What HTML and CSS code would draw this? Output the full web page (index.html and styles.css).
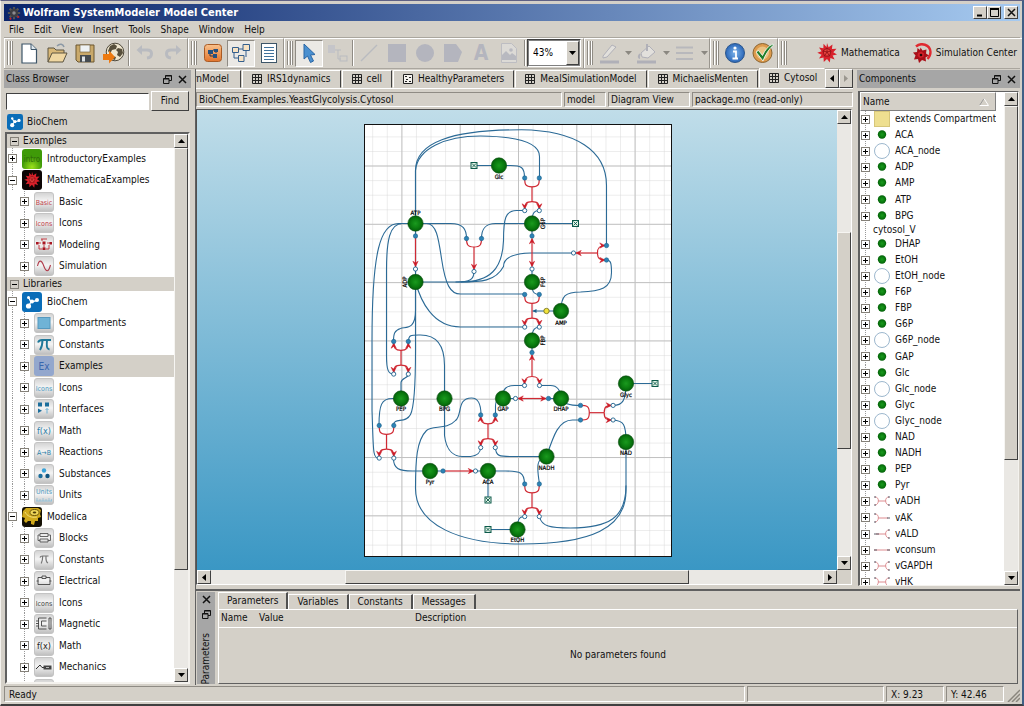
FILE: index.html
```html
<!DOCTYPE html>
<html lang="en">
<head>
<meta charset="utf-8">
<title>Wolfram SystemModeler Model Center</title>
<link rel="stylesheet" href="styles.css">
</head>
<body>
<svg class="defs" aria-hidden="true">
  <defs>
    <linearGradient id="tile" x1="0" y1="0" x2="0" y2="1"><stop offset="0" stop-color="#d2d2d2"/><stop offset=".45" stop-color="#f4f4f4"/><stop offset="1" stop-color="#bdbdbd"/></linearGradient>
    <radialGradient id="ball"><stop offset="0" stop-color="#1a9a1e"/><stop offset=".6" stop-color="#0b7d10"/><stop offset="1" stop-color="#04600a"/></radialGradient>
    <radialGradient id="lime" cy="0.9"><stop offset="0" stop-color="#9be01c"/><stop offset="1" stop-color="#3f9a08"/></radialGradient>
    <radialGradient id="infoG"><stop offset="0" stop-color="#7db4ea"/><stop offset="1" stop-color="#2a66b8"/></radialGradient>
    <linearGradient id="orangeG" x1="0" y1="0" x2="0" y2="1"><stop offset="0" stop-color="#f9c28c"/><stop offset="1" stop-color="#e2742c"/></linearGradient>
  </defs>
  <symbol id="i-tile" viewBox="0 0 20 20"><rect x=".5" y=".5" width="19" height="19" rx="2.5" fill="url(#tile)" stroke="#c4c4c4"/></symbol>
  <symbol id="i-spikey" viewBox="0 0 20 20"><path d="M10 0l1.600 4.200L15.500 1.500l-.6 4.500 4.600-.3-3.200 3.500 3.700 2.300-4.400 1 2 4-4.200-1.500-.6 4.600-2.800-3.700-3.200 3.200-.3-4.500-4.500.8 2.600-3.700L.3 9.800l4.300-1.500L2 4.600l4.400.7L6.500.8l3 3.200z" fill="#d8202a"/><path d="M10 5l4 3-1.500 5h-5L6 8zM10 5v4M14 8l-4 1M12.500 13L10 9M7.500 13L10 9M6 8l4 1" fill="#e8453f" stroke="#8c0d14" stroke-width=".8"/></symbol>
  <symbol id="i-mma" viewBox="0 0 20 20"><rect width="20" height="20" rx="3" fill="#0c0505"/><use href="#i-spikey" x="2" y="2" width="16" height="16"/></symbol>
  <symbol id="i-modeling" viewBox="0 0 20 20"><use href="#i-tile"/><path d="M3 8h4M13 8h4M8 6V4M7 4h6M10 10v4M5 10v4h3M15 10v4h-3" fill="none" stroke="#c22a34" stroke-width=".9"/><path d="M2 7h2.500v2.500H2zM8.500 6.500h3V9.500h-3zM15.500 7h2.500v2.500h-2.500zM8.500 12.500h3V15h-3z" fill="#a81622"/></symbol>
  <symbol id="i-sim" viewBox="0 0 20 20"><use href="#i-tile"/><path d="M3.500 10C5 3.500 7.500 3.500 9.800 10S14.500 16.500 16.500 9" fill="none" stroke="#b03848" stroke-width="1.100"/></symbol>
  <symbol id="i-bio" viewBox="0 0 20 20"><rect width="20" height="20" rx="3" fill="#0a6db8"/><path d="M6.500 5.500L9 10l6-1.500M9 10l-2.500 4" stroke="#fff" stroke-width="1.300" fill="none"/><circle cx="6.500" cy="5.500" r="1.500" fill="#fff"/><circle cx="10" cy="9.500" r="2" fill="#fff"/><circle cx="15" cy="8" r="2" fill="#fff"/><circle cx="6.500" cy="14" r="2.600" fill="#fff"/></symbol>
  <symbol id="i-comp" viewBox="0 0 20 20"><use href="#i-tile"/><rect x="4" y="4.500" width="12" height="11" fill="#6fb3d6" stroke="#5598be"/></symbol>
  <symbol id="i-pi-b" viewBox="0 0 20 20"><use href="#i-tile"/><path d="M4 7.500C5 5 6 5 8 5h9M8.500 5c0 4-.5 7-2.500 10M13 5c-.5 6-.5 9 2.500 9.500" fill="none" stroke="#1e7899" stroke-width="1.900"/></symbol>
  <symbol id="i-pi-k" viewBox="0 0 20 20"><use href="#i-tile"/><path d="M6 7.500C6.500 6 7 6 8.500 6H14.500M8.700 6c0 3-.2 5-1.500 7.500M12 6c-.3 4-.3 6 2 7" fill="none" stroke="#777" stroke-width="1.200"/></symbol>
  <symbol id="i-iface" viewBox="0 0 20 20"><use href="#i-tile"/><rect x="4" y="3.500" width="4" height="4" fill="#1c6e9c"/><rect x="11" y="3.500" width="4" height="4" fill="#1c6e9c"/><path d="M4 9.500l4 2.300-4 2.200z" fill="#1c6e9c"/><path d="M13 9.500v5M11.500 11l1.500-1.500 1.500 1.500" stroke="#6db1d5" fill="none"/></symbol>
  <symbol id="i-subst" viewBox="0 0 20 20"><use href="#i-tile"/><circle cx="10" cy="6.500" r="2.200" fill="#39a2d8"/><circle cx="6.500" cy="12" r="2.200" fill="#1c6e9c"/><circle cx="13.500" cy="12" r="2.200" fill="#0f5580"/></symbol>
  <symbol id="i-gear" viewBox="0 0 20 20"><rect width="20" height="20" rx="3" fill="#141004"/><path d="M1 4l3-3h12l3 2-1 4 1 3-3 1 0 3-3 0-1 4-3-1 0-3-3 0-2 2-2-2 1-3-3-1z" fill="#d0a91c"/><ellipse cx="12.500" cy="5.500" rx="4.500" ry="3" fill="#f0d75a" stroke="#6b540a"/><ellipse cx="12.500" cy="5.500" rx="1.800" ry="1.100" fill="#4c3c08"/><path d="M3 5c2 4 6 6 12 5" fill="none" stroke="#f3e07a"/></symbol>
  <symbol id="i-blocks" viewBox="0 0 20 20"><use href="#i-tile"/><path d="M6 5.500h8v3H6zM6 11h8v3H6zM6 7H4v5.500h2M14 7h2.500v5.500H14" fill="none" stroke="#555" stroke-width=".9"/></symbol>
  <symbol id="i-elec" viewBox="0 0 20 20"><use href="#i-tile"/><path d="M4 6.500h4M12 6.500h4v7H4v-7M8 5h4v2.500H8zM2.500 10h2M15.500 10h2" fill="none" stroke="#444" stroke-width=".9"/></symbol>
  <symbol id="i-mag" viewBox="0 0 20 20"><use href="#i-tile"/><path d="M12.500 4h-8v11h8M12.500 7H7.500v5h5M15 4h2v11h-2zM2 7h3M2 9.500h3M2 12h3" fill="none" stroke="#444" stroke-width=".9"/></symbol>
  <symbol id="i-mech" viewBox="0 0 20 20"><use href="#i-tile"/><path d="M2 12l4-4 2 2.500h3" fill="none" stroke="#333"/><rect x="9.500" y="8.500" width="8" height="4" fill="#444"/><path d="M12 10.500h3" stroke="#bbb"/></symbol>
  <symbol id="c-dot" viewBox="0 0 16 16"><circle cx="8" cy="7.500" r="4.200" fill="url(#ball)"/></symbol>
  <symbol id="c-ring" viewBox="0 0 16 16"><circle cx="8" cy="8" r="7.500" fill="#fff" stroke="#83a5c0" stroke-width=".8"/></symbol>
  <symbol id="c-sq" viewBox="0 0 16 16"><rect x=".5" y="0.500" width="15" height="15" fill="#eedf90" stroke="#d6c67a"/></symbol>
  <symbol id="c-yy" viewBox="0 0 16 16"><path d="M1 4c5 0 4 8 0 8M4.500 8h7M15 4c-5 0-4 8 0 8" fill="none" stroke="#d98085" stroke-width=".9"/><path d="M0 4h2M0 12h2M14 4h2M14 12h2" stroke="#5b5b66"/></symbol>
  <symbol id="c-yl" viewBox="0 0 16 16"><path d="M1 4c5 0 4 8 0 8M4.500 8H14" fill="none" stroke="#d98085" stroke-width=".9"/><path d="M0 4h2M0 12h2M13 8h3" stroke="#5b5b66"/></symbol>
  <symbol id="c-ly" viewBox="0 0 16 16"><path d="M2 8h9.500M15 4c-5 0-4 8 0 8" fill="none" stroke="#d98085" stroke-width=".9"/><path d="M0 8h5M14 4h2M14 12h2" stroke="#5b5b66"/></symbol>
  <symbol id="c-l" viewBox="0 0 16 16"><path d="M0 8h16" stroke="#d98085" stroke-width=".9"/><path d="M0 8h3M13 8h3" stroke="#5b5b66"/></symbol>
  <symbol id="i-grid" viewBox="0 0 10 10"><path d="M.5.500h9v9h-9zM.5 3.500h9M.5 6.500h9M3.500.500v9M6.500.500v9" fill="none" stroke="#222"/></symbol>
  <symbol id="i-rec" viewBox="0 0 10 10"><path d="M.5.500h9v9h-9z" fill="#f4f2ee" stroke="#222"/><path d="M2 2.500h2M6 3.500h2M3 5.500h2M2 7.500h2M6 7.500h2" stroke="#222"/></symbol>
  <symbol id="i-float" viewBox="0 0 9 9"><path d="M2.500 3V.500h6v5H6M2.500 1h6M.5 3.500h5.500v5H.5zM.5 4h5.500" fill="none" stroke="#111"/></symbol>
  <symbol id="i-x" viewBox="0 0 9 9"><path d="M1 1l7 7M8 1L1 8" stroke="#111" stroke-width="1.500"/></symbol>
  <symbol id="a-up" viewBox="0 0 7 4"><path d="M3.500 0L7 4H0z"/></symbol>
  <symbol id="a-down" viewBox="0 0 7 4"><path d="M0 0h7L3.500 4z"/></symbol>
  <symbol id="a-left" viewBox="0 0 4 7"><path d="M4 0v7L0 3.500z"/></symbol>
  <symbol id="a-right" viewBox="0 0 4 7"><path d="M0 0v7l4-3.500z"/></symbol>
</svg>

<header class="titlebar">
  <svg class="appicon" viewBox="0 0 16 16"><path d="M8 1v14M1 8h14M3 3l10 10M13 3L3 13" stroke="#555" stroke-width="2.500"/><circle cx="8" cy="8" r="4.800" fill="#3d3d42"/><circle cx="8" cy="8" r="2" fill="#8b8b90"/><path d="M5 14l-2 1M12 13l2-1" stroke="#c0202a" stroke-width="2"/></svg>
  <h1>Wolfram SystemModeler Model Center</h1>
  <button class="cap" aria-label="Minimize"><svg viewBox="0 0 9 9"><path d="M1 7.500h5" stroke="#000" stroke-width="2"/></svg></button><button class="cap" aria-label="Maximize"><svg viewBox="0 0 9 9"><path d="M.5 1h8v7.500h-8z" fill="none" stroke="#000"/><path d="M0 1h9" stroke="#000" stroke-width="2"/></svg></button><button class="cap last" aria-label="Close"><svg><use href="#i-x"/></svg></button>
</header>

<nav class="menu"><button>File</button><button>Edit</button><button>View</button><button>Insert</button><button>Tools</button><button>Shape</button><button>Window</button><button>Help</button></nav>

<div class="toolbar">
  <div class="group">
    <i class="handle"></i>
    <button class="tb" aria-label="New"><svg viewBox="0 0 24 24"><path d="M5 3h9l5.500 5.500V22H5z" fill="#fff" stroke="#3d5568" stroke-width="1.200"/><path d="M14 3v5.500h5.500" fill="#dfe8ee" stroke="#3d5568"/></svg></button>
    <button class="tb" aria-label="Open"><svg viewBox="0 0 24 24"><path d="M3 21V7h6l2 2h8v4" fill="#d9b878" stroke="#5c5440"/><path d="M3 21l4-9h15l-4 9z" fill="#f0d7a2" stroke="#5c5440"/><path d="M12 5c3-3 6-2 7 1" fill="none" stroke="#8b98a5" stroke-width="1.500"/></svg></button>
    <button class="tb" aria-label="Save"><svg viewBox="0 0 24 24"><path d="M3 4h18v17H5l-2-2z" fill="#c9a96b" stroke="#6a5630"/><rect x="7" y="4" width="10" height="7" fill="#eef2f4" stroke="#6a5630" stroke-width=".6"/><rect x="7" y="14" width="11" height="7" fill="#454b50"/><rect x="9" y="15.500" width="3" height="5" fill="#dfe3e6"/></svg></button>
    <button class="tb" aria-label="Publish"><svg viewBox="0 0 24 24"><circle cx="14" cy="11" r="8.800" fill="#efe6cf" stroke="#4f4a3d"/><path d="M9 5l4-2 3 2-1 3-4 1-2 4-2-3zM17 7l4 1 1 4-3 4-3-2 1-3-2-2zM11 15l4 1-1 3-3-1z" fill="#574f3c"/><path d="M2 13h6V9.500l6 6.500-6 6.500V19H2z" fill="#ee7a10"/></svg></button>
    <i class="sep"></i>
    <button class="tb" aria-label="Undo"><svg viewBox="0 0 24 24"><path d="M7 9h7c6 0 6 7 0 8" fill="none" stroke="#b9bbc0" stroke-width="3"/><path d="M9 4v10L3.500 9z" fill="#b9bbc0"/></svg></button>
    <button class="tb" aria-label="Redo"><svg viewBox="0 0 24 24"><path d="M17 9h-7c-6 0-6 7 0 8" fill="none" stroke="#b9bbc0" stroke-width="3"/><path d="M15 4v10l5.500-5z" fill="#b9bbc0"/></svg></button>
  </div>
  <div class="group">
    <i class="handle"></i>
    <button class="tb" aria-label="Icon view"><svg viewBox="0 0 24 24"><rect x="3.500" y="3.500" width="17" height="17" rx="3" fill="url(#orangeG)" stroke="#a85a24"/><path d="M12 9h3v3M9 13v2h4" fill="none" stroke="#334"/><path d="M7 9h5v4H7zM13 8h4v3h-4zM12 13h4v4h-4z" fill="#25517f"/></svg></button>
    <button class="tb on" aria-label="Diagram view"><svg viewBox="0 0 24 24"><path d="M8 8h9M5 10v7h5M17 8v8" fill="none" stroke="#345f8d"/><path d="M3.500 6.500h6v5h-6zM14 3.500h6.500v6H14zM9.500 14.500H15v6H9.500z" fill="#f8e3c4" stroke="#345f8d"/></svg></button>
    <button class="tb" aria-label="Text view"><svg viewBox="0 0 24 24"><rect x="4.500" y="2.500" width="15" height="19" fill="#fff" stroke="#3d5568"/><path d="M7 6.500h10M7 9.500h10M7 12.500h10M7 15.500h10M7 18.500h10" stroke="#40729c" stroke-width="1.200"/></svg></button>
  </div>
  <div class="group">
    <i class="handle"></i>
    <button class="tb on" aria-label="Select"><svg viewBox="0 0 24 24"><path d="M7 3v15l3.500-3 3 6.500 3-1.500-3-6 4.500-.5z" fill="#4a90d0" stroke="#2b66a4"/></svg></button>
    <button class="tb" aria-label="Connect"><svg viewBox="0 0 24 24"><path d="M8 9h8M13 9v9h3" fill="none" stroke="#b9bbc0"/><rect x="3" y="4" width="7" height="8" fill="#c5c5c9"/><rect x="15" y="15" width="7" height="5" fill="none" stroke="#b9bbc0"/></svg></button>
    <i class="sep"></i>
    <button class="tb" aria-label="Line"><svg viewBox="0 0 24 24"><path d="M4 20L20 4" stroke="#b9bbc0" stroke-width="1.500"/></svg></button>
    <button class="tb" aria-label="Rectangle"><svg viewBox="0 0 24 24"><rect x="3" y="3" width="18" height="18" fill="#b4b5be"/></svg></button>
    <button class="tb" aria-label="Ellipse"><svg viewBox="0 0 24 24"><circle cx="12" cy="12" r="9" fill="#b4b5be"/></svg></button>
    <button class="tb" aria-label="Polygon"><svg viewBox="0 0 24 24"><path d="M3 3h12l6 8-4 10H3z" fill="#b4b5be"/></svg></button>
    <button class="tb letter" aria-label="Text">A</button>
    <button class="tb" aria-label="Bitmap"><svg viewBox="0 0 24 24"><path d="M4.500 2.500h10l5 5v14h-15z" fill="#dcdad6" stroke="#bdbdc2"/><path d="M5 14l4-4 4 4 2-2 4 3v4H5z" fill="#b8b9c0"/><circle cx="14" cy="9" r="1.800" fill="#b8b9c0"/></svg></button>
    <i class="sep"></i>
    <div class="combo"><select aria-label="Zoom"><option>43%</option></select><span class="drop"><svg class="ad"><use href="#a-down"/></svg></span></div>
  </div>
  <div class="group">
    <i class="handle"></i>
    <button class="tb" aria-label="Line color"><svg viewBox="0 0 24 24"><path d="M3 21h19" stroke="#b0b0b8" stroke-width="3"/><path d="M6 15l9-11 4 2-9 10-4 1z" fill="#e2e0dc" stroke="#b0b0b8"/></svg></button><button class="dd" aria-label="Line color options"><svg class="ad"><use href="#a-down"/></svg></button>
    <button class="tb" aria-label="Fill color"><svg viewBox="0 0 24 24"><path d="M2 21h19" stroke="#b0b0b8" stroke-width="3"/><path d="M6 12l8-7 6 6-7 6-6-1z" fill="#e2e0dc" stroke="#b0b0b8"/><path d="M12 3v7M5 13c-2 3-1 4 0 4" stroke="#b0b0b8" stroke-width="2" fill="none"/></svg></button><button class="dd" aria-label="Fill color options"><svg class="ad"><use href="#a-down"/></svg></button>
    <button class="tb" aria-label="Line width"><svg viewBox="0 0 24 24"><path d="M3 6.500h17M3 12h17M3 18h17" stroke="#b8b8bc" stroke-width="2"/></svg></button><button class="dd" aria-label="Line width options"><svg class="ad"><use href="#a-down"/></svg></button>
  </div>
  <div class="group">
    <i class="handle"></i>
    <button class="tb" aria-label="Info"><svg viewBox="0 0 24 24"><circle cx="12" cy="12" r="9.500" fill="url(#infoG)" stroke="#2d578c"/><circle cx="12" cy="7" r="1.600" fill="#fff"/><path d="M10 10.500h3V17M9.500 17.500h5.500" stroke="#fff" stroke-width="1.800" fill="none"/></svg></button>
    <button class="tb" aria-label="Validate"><svg viewBox="0 0 24 24"><circle cx="11.500" cy="12" r="9.500" fill="#dd9a4c" stroke="#8a6430"/><circle cx="11.500" cy="12" r="6.500" fill="#eac384"/><path d="M5 11l2.500-1.500 4 5C14 9 17 5 22 3l.5 1C18 8 14 14 12 20z" fill="#1f7d2a" stroke="#fff" stroke-width=".8"/></svg></button>
  </div>
  <div class="group apps">
    <i class="handle"></i>
    <button class="app"><svg><use href="#i-spikey"/></svg>Mathematica</button>
    <button class="app"><svg viewBox="0 0 20 20"><path d="M4 3.500C9-1 18 1.500 18.500 9c0 3-1 5-3 7" fill="none" stroke="#e02a30" stroke-width="2.400"/><path d="M8.500 4.500l2 3 4-1-.5 4 3 2-3.500 2 .5 4-4-1.500L7 20l-1-4-4 .5 1.500-4L1 9.500l4-.5.5-4 2.500 2z" fill="#a80f18"/><path d="M6 10l3-1.500 3 2-.5 3.500-3.500 1-2.500-2z" fill="#d22029"/><circle cx="9" cy="12" r="1.300" fill="#2c0507"/></svg>Simulation Center</button>
  </div>
</div>

<main>
  <section class="dock browser">
    <div class="docktitle"><h2>Class Browser</h2><button aria-label="Float class browser"><svg><use href="#i-float"/></svg></button><button aria-label="Close class browser"><svg><use href="#i-x"/></svg></button></div>
    <form class="find"><input type="text" aria-label="Find class"><button type="button">Find</button></form>
    <div class="current"><svg><use href="#i-bio"/></svg>BioChem</div>
    <div class="treebox">
      <div class="scrollport">
        <div class="cat"><button class="exp open" aria-label="Collapse"></button>Examples</div>
        <ul class="tree">
          <li class="l1"><button class="exp" aria-label="Expand"></button><svg viewBox="0 0 20 20" class="t8"><rect width="20" height="20" rx="3" fill="url(#lime)"/><text x="10" y="13" fill="#2f6b08">intro</text></svg>IntroductoryExamples</li>
          <li class="l1"><button class="exp open" aria-label="Collapse"></button><svg><use href="#i-mma"/></svg>MathematicaExamples</li>
          <li><button class="exp" aria-label="Expand"></button><svg viewBox="0 0 20 20" class="t7"><use href="#i-tile"/><text x="10" y="12.500" fill="#c0404a">Basic</text></svg>Basic</li>
          <li><button class="exp" aria-label="Expand"></button><svg viewBox="0 0 20 20" class="t7"><use href="#i-tile"/><text x="10" y="12.500" fill="#c0404a">Icons</text></svg>Icons</li>
          <li><button class="exp" aria-label="Expand"></button><svg><use href="#i-modeling"/></svg>Modeling</li>
          <li><button class="exp" aria-label="Expand"></button><svg><use href="#i-sim"/></svg>Simulation</li>
        </ul>
        <div class="cat"><button class="exp open" aria-label="Collapse"></button>Libraries</div>
        <ul class="tree">
          <li class="l1"><button class="exp open" aria-label="Collapse"></button><svg><use href="#i-bio"/></svg>BioChem</li>
          <li class="mid"><button class="exp" aria-label="Expand"></button><svg><use href="#i-comp"/></svg>Compartments</li>
          <li class="mid"><button class="exp" aria-label="Expand"></button><svg><use href="#i-pi-b"/></svg>Constants</li>
          <li class="mid sel"><button class="exp" aria-label="Expand"></button><svg viewBox="0 0 20 20" class="t10"><rect width="20" height="20" rx="3" fill="#93a7cd"/><text x="10" y="13.500" fill="#3866ae">Ex</text></svg>Examples</li>
          <li class="mid"><button class="exp" aria-label="Expand"></button><svg viewBox="0 0 20 20" class="t7"><use href="#i-tile"/><text x="10" y="12.500" fill="#4f9cc4">Icons</text></svg>Icons</li>
          <li class="mid"><button class="exp" aria-label="Expand"></button><svg><use href="#i-iface"/></svg>Interfaces</li>
          <li class="mid"><button class="exp" aria-label="Expand"></button><svg viewBox="0 0 20 20" class="t9"><use href="#i-tile"/><text x="10" y="13" fill="#2c7fa8">f(x)</text></svg>Math</li>
          <li class="mid"><button class="exp" aria-label="Expand"></button><svg viewBox="0 0 20 20" class="t7"><use href="#i-tile"/><text x="10" y="12.500" fill="#2c7fa8">A→B</text></svg>Reactions</li>
          <li class="mid"><button class="exp" aria-label="Expand"></button><svg><use href="#i-subst"/></svg>Substances</li>
          <li class="mid"><button class="exp" aria-label="Expand"></button><svg viewBox="0 0 20 20" class="t7"><use href="#i-tile"/><text x="10" y="8.500" fill="#4f9cc4">Units</text><path d="M2 16h16M3 16v-3M6 16v-2M9 16v-3M12 16v-2M15 16v-3M17.500 16v-2" stroke="#8cc0dc" stroke-width=".8"/></svg>Units</li>
          <li class="l1"><button class="exp open" aria-label="Collapse"></button><svg><use href="#i-gear"/></svg>Modelica</li>
          <li><button class="exp" aria-label="Expand"></button><svg><use href="#i-blocks"/></svg>Blocks</li>
          <li><button class="exp" aria-label="Expand"></button><svg><use href="#i-pi-k"/></svg>Constants</li>
          <li><button class="exp" aria-label="Expand"></button><svg><use href="#i-elec"/></svg>Electrical</li>
          <li><button class="exp" aria-label="Expand"></button><svg viewBox="0 0 20 20" class="t7"><use href="#i-tile"/><text x="10" y="12.500" fill="#444">Icons</text></svg>Icons</li>
          <li><button class="exp" aria-label="Expand"></button><svg><use href="#i-mag"/></svg>Magnetic</li>
          <li><button class="exp" aria-label="Expand"></button><svg viewBox="0 0 20 20" class="t9"><use href="#i-tile"/><text x="10" y="13" fill="#222">f(x)</text></svg>Math</li>
          <li><button class="exp" aria-label="Expand"></button><svg><use href="#i-mech"/></svg>Mechanics</li>
          <li><i class="gap"></i><svg><use href="#i-tile"/></svg></li>
        </ul>
      </div>
      <div class="sb v"><button aria-label="Scroll up"><svg class="ad"><use href="#a-up"/></svg></button><div class="track"><i class="thumb t-left"></i><i class="rest r-left"></i></div><button aria-label="Scroll down"><svg class="ad"><use href="#a-down"/></svg></button></div>
    </div>
  </section>

  <div class="work">
    <div class="upper">
      <section class="editor">
        <div class="tabs">
          <button class="tab cut">rnModel</button>
          <button class="tab"><svg><use href="#i-grid"/></svg>IRS1dynamics</button>
          <button class="tab"><svg><use href="#i-grid"/></svg>cell</button>
          <button class="tab"><svg><use href="#i-rec"/></svg>HealthyParameters</button>
          <button class="tab"><svg><use href="#i-grid"/></svg>MealSimulationModel</button>
          <button class="tab"><svg><use href="#i-grid"/></svg>MichaelisMenten</button>
          <button class="tab active"><svg><use href="#i-grid"/></svg>Cytosol</button>
          <span class="tabscroll"><button aria-label="Previous tabs"><svg class="al"><use href="#a-left"/></svg></button><button aria-label="Next tabs" disabled><svg class="al"><use href="#a-right"/></svg></button></span>
        </div>
        <div class="info"><span class="path">BioChem.Examples.YeastGlycolysis.Cytosol</span><span class="kind">model</span><span class="view">Diagram View</span><span class="file">package.mo (read-only)</span></div>
        <div class="canvasbox">
          <div class="canvas">
            <svg class="diagram" viewBox="363.500 123.500 308 433" role="img" aria-label="Cytosol diagram">
              <defs>
                <pattern id="minor" x="371.700" y="135.900" width="14.580" height="14.580" patternUnits="userSpaceOnUse"><path d="M0 0V14.580M0 0H14.580" stroke="#d9d9d9" fill="none"/></pattern>
                <pattern id="major" x="400.900" y="165" width="58.300" height="58.300" patternUnits="userSpaceOnUse"><path d="M.5 0V58.300M0 .5H58.300" stroke="#c2c2c2" fill="none"/></pattern>
                <marker id="arr" viewBox="0 0 8 8" refX="7" refY="4" markerWidth="7" markerHeight="7" markerUnits="userSpaceOnUse" orient="auto-start-reverse"><path d="M1 1L7 4L1 7L3 4z" fill="#cc1c28" stroke="#cc1c28" stroke-width=".6"/></marker>
                <g id="n"><circle r="7.700" fill="url(#ball)" stroke="#0a4f10" stroke-width=".6"/></g>
                <g id="d"><circle r="2.200" fill="#2d83b5" stroke="#1c618c" stroke-width=".6"/></g>
                <g id="o"><circle r="2.100" fill="#fff" stroke="#1c618c" stroke-width=".9"/></g>
                <g id="s"><rect x="-3" y="-3" width="6" height="6" fill="#e2f2e6" stroke="#0c5a4a"/><path d="M-2-2l4 4M2-2l-4 4" stroke="#0c5a4a" stroke-width=".9"/></g>
                <g id="in"><path class="r" d="M-7.300 0C-7.300 6-7 8.800 0 8.800S7.300 6 7.300 0"/></g>
                <g id="out"><path class="r" marker-end="url(#arr)" d="M0 23.700C-6 23.700-7.300 26-7.300 31"/><path class="r" marker-end="url(#arr)" d="M0 23.700C6 23.700 7.300 26 7.300 31"/></g>
                <g id="inrev"><path class="r" marker-end="url(#arr)" d="M0 8.800C-6 8.800-7.300 6-7.300 1.500"/><path class="r" marker-end="url(#arr)" d="M0 8.800C6 8.800 7.300 6 7.300 1.500"/></g>
                <g id="ends"><path class="r" d="M0 8.800V23.700"/><use href="#d" x="-7.300"/><use href="#d" x="7.300"/><use href="#o" x="-7.300" y="32.600"/><use href="#o" x="7.300" y="32.600"/></g>
                <g id="yy"><use href="#in"/><use href="#out"/><use href="#ends"/></g>
                <g id="yr"><use href="#inrev"/><use href="#out"/><use href="#ends"/></g>
              </defs>
              <rect x="364" y="124" width="307" height="432" fill="#fff"/>
              <rect x="364" y="124" width="307" height="432" fill="url(#minor)"/>
              <rect x="364" y="124" width="307" height="432" fill="url(#major)"/>
              <rect x="364" y="124" width="307" height="432" fill="none" stroke="#111"/>
              <g class="b">
                <path d="M415 223V170C415 142 450 129.300 521 129.300C575 130 606 150 606 185V245"/>
                <path d="M415 223V170C417 148 445 135.500 480 135.500C520 136 539 143 539 156V177"/>
                <path d="M473 165H510C521 165 524 167 524 177M539 210C533 210 531.500 213 531.500 223H575"/>
                <path d="M524 210H516C505 210 503 218 503 240C502 268 490 281.500 460 281.500H415"/>
                <path d="M531.500 223H495C484 223 481 229 481 238M415 223H450C463 223 466 229 466 238"/>
                <path d="M473.500 271C473.500 279 470 281.500 455 281.500"/>
                <path d="M573 252.500H530C512 253 503 258 503 266C495 281 480 281.500 460 281.500"/>
                <path d="M415 223H426C436 223 438 238 441 258C445 285 450 293.500 460 293.500H524"/>
                <path d="M415 281.500C420 300 432 326.500 460 326.500H524"/>
                <path d="M415 223H398C380 223 371.500 250 371.500 340V410C373 450 372 458 378.500 458"/>
                <path d="M415 223H402C389 223 386 240 386 270V355C386 370 388 373.500 393 373.500"/>
                <path d="M415 223V350C415 385 413 408 410 414C405 424 393 416 393 425"/>
                <path d="M415 290V310C415 330 405 326 400 328C394 330 393 333 393 341"/>
                <path d="M408 341C408 334 411 334.500 420 334.500C436 334.500 444 345 444 365V435C446 452 455 456 462 456H470C478 455 480 452 480 447"/>
                <path d="M408 373.500C408 378 401 377 400.500 382V398H392C381 398 378.500 404 378.500 425"/>
                <path d="M393 458C393 468 398 470.500 412 470.500H442M475 470.500H505C520 470.500 524 472 524 483.500M487.500 470V500M487.500 529H517C517 520 518 516 524 516"/>
                <path d="M480.500 414.500C480.500 402 477 397.500 471 397.500C456 397.500 462 415 455 420C446 430 432 424 426 430C416 440 415 460 415 488C415 525 460 543.500 520 543.500C590 543.500 625.500 528 625.500 490V441"/>
                <path d="M539 516C541 526 550 527.500 570 527.500C608 527 625.500 518 625.500 485"/>
                <path d="M495 447C495 456 500 456 510 456H546C553 435 558 419.500 572 419.500H580M546 456C536 458 536 465 539 483.500"/>
                <path d="M495 414.500V405C495 400 498 398 502 398C502 388 506 385 514 385H524M539 385H550C556 385 560 388 560.500 398C562 403 568 405 580 405M502 398H515M548 398H560"/>
                <path d="M612.500 405C622 405 625.500 400 625.500 383H654M612.500 419.500C623 420 625.500 424 625.500 441"/>
                <path d="M539 294C532 294 531.500 290 531.500 281V268M539 326.500C532 327 531.500 332 531.500 340V352M531.500 223V235"/>
                <path d="M532 310.500H560.500C560.500 295 565 291.500 580 291.500C600 291 611 288 611 272C611 262 610 259.500 606 259.500"/>
              </g>
              <use href="#yy" x="531.500" y="177.500"/><use href="#yy" x="531.500" y="294"/><use href="#yr" x="400.500" y="341"/><use href="#yy" x="386" y="425"/><use href="#yr" x="487.500" y="414.500"/><use href="#yy" x="531.500" y="483.500"/>
              <g transform="translate(580 412.200) rotate(-90)"><use href="#yy"/></g>
              <g class="r">
                <path marker-end="url(#arr)" d="M415 236V266"/>
                <path marker-start="url(#arr)" marker-end="url(#arr)" d="M531.500 238V266"/>
                <path marker-start="url(#arr)" marker-end="url(#arr)" d="M517.500 398H545.500"/>
                <path marker-end="url(#arr)" d="M443 470.500H473"/>
                <path d="M466 238C466 244 467 246.500 473.500 246.500S481 244 481 238"/>
                <path marker-end="url(#arr)" d="M473.500 246.500V269"/>
                <path marker-end="url(#arr)" d="M597 252.500H575.500"/>
                <path marker-end="url(#arr)" d="M597 252.500C597 247 599 245 604.500 245"/>
                <path marker-end="url(#arr)" d="M597 252.500C597 258 599 259.500 604.500 259.500"/>
                <path marker-end="url(#arr)" d="M531.500 376V354.500"/>
                <path marker-end="url(#arr)" d="M531.500 376C525.500 376 524 378.500 524 383.500"/>
                <path marker-end="url(#arr)" d="M531.500 376C537.500 376 539 378.500 539 383.500"/>
              </g>
              <path d="M532 310.500l4-2v4z" fill="#1c618c"/>
              <use href="#d" x="415" y="235.500"/><use href="#o" x="415" y="268.500"/><use href="#d" x="531.500" y="235.500"/><use href="#o" x="531.500" y="268.500"/>
              <use href="#d" x="466" y="238"/><use href="#d" x="481" y="238"/><use href="#o" x="473.500" y="271"/>
              <use href="#d" x="606" y="245"/><use href="#d" x="606" y="259.500"/><use href="#o" x="573" y="252.500"/>
              <use href="#d" x="531.500" y="352"/><use href="#o" x="524" y="385"/><use href="#o" x="539" y="385"/>
              <use href="#o" x="515" y="398"/><use href="#d" x="548" y="398"/><use href="#d" x="442.500" y="470.500"/><use href="#o" x="475" y="470.500"/>
              <circle cx="546" cy="310.500" r="2.700" fill="#f2e33c" stroke="#6b6a20" stroke-width=".8"/>
              <use href="#n" x="498.500" y="165"/><use href="#n" x="415" y="223"/><use href="#n" x="415" y="281.500"/><use href="#n" x="531.500" y="223"/><use href="#n" x="531.500" y="281.500"/><use href="#n" x="531.500" y="340"/><use href="#n" x="560.500" y="310.500"/><use href="#n" x="400.500" y="398"/><use href="#n" x="444" y="398"/><use href="#n" x="502.500" y="398"/><use href="#n" x="560.500" y="398"/><use href="#n" x="625.500" y="383"/><use href="#n" x="625.500" y="441.500"/><use href="#n" x="546" y="456"/><use href="#n" x="429.500" y="470.500"/><use href="#n" x="487.500" y="470.500"/><use href="#n" x="517" y="529"/>
              <use href="#s" x="473.500" y="165"/><use href="#s" x="575" y="223"/><use href="#s" x="654.500" y="383"/><use href="#s" x="487.500" y="499.500"/><use href="#s" x="487.500" y="529"/>
              <g class="lab">
                <text x="498.500" y="178">Glc</text><text x="415" y="214">ATP</text><text x="560.500" y="324">AMP</text><text x="400.500" y="410.500">PEP</text><text x="444" y="410.500">BPG</text><text x="502.500" y="410.500">GAP</text><text x="560.500" y="410.500">DHAP</text><text x="625.500" y="396">Glyc</text><text x="625.500" y="454.500">NAD</text><text x="546" y="469">NADH</text><text x="429.500" y="483.500">Pyr</text><text x="487.500" y="483.500">ACA</text><text x="517" y="541.500">EtOH</text>
                <text transform="translate(406.500 281.500) rotate(-90)">ADP</text><text transform="translate(544 223) rotate(-90)">G6P</text><text transform="translate(544 281.500) rotate(-90)">F6P</text><text transform="translate(544 340) rotate(-90)">FBP</text>
              </g>
            </svg>
          </div>
          <div class="sb v"><button aria-label="Scroll up"><svg class="ad"><use href="#a-up"/></svg></button><div class="track"><i class="rest r-25"></i><i class="thumb t-50"></i><i class="rest r-25"></i></div><button aria-label="Scroll down"><svg class="ad"><use href="#a-down"/></svg></button></div>
          <div class="sb h"><button aria-label="Scroll left"><svg class="al"><use href="#a-left"/></svg></button><div class="track"><i class="rest r-22"></i><i class="thumb t-56"></i><i class="rest r-22"></i></div><button aria-label="Scroll right"><svg class="al"><use href="#a-right"/></svg></button></div>
        </div>
      </section>

      <section class="dock components">
        <div class="docktitle"><h2>Components</h2><button aria-label="Float components"><svg><use href="#i-float"/></svg></button><button aria-label="Close components"><svg><use href="#i-x"/></svg></button></div>
        <div class="treebox">
          <div class="scrollport">
            <button class="colhead">Name<svg viewBox="0 0 10 8"><path d="M5 .5L.5 7.500" stroke="#999" fill="none"/><path d="M5 .5L9.500 7.500H.5" stroke="#fff" fill="none"/></svg></button>
            <ul class="tree parts">
              <li><button class="exp" aria-label="Expand"></button><svg><use href="#c-sq"/></svg>extends Compartment</li>
              <li><button class="exp" aria-label="Expand"></button><svg><use href="#c-dot"/></svg>ACA</li>
              <li><button class="exp" aria-label="Expand"></button><svg><use href="#c-ring"/></svg>ACA_node</li>
              <li><button class="exp" aria-label="Expand"></button><svg><use href="#c-dot"/></svg>ADP</li>
              <li><button class="exp" aria-label="Expand"></button><svg><use href="#c-dot"/></svg>AMP</li>
              <li><button class="exp" aria-label="Expand"></button><svg><use href="#c-dot"/></svg>ATP</li>
              <li><button class="exp" aria-label="Expand"></button><svg><use href="#c-dot"/></svg>BPG</li>
              <li class="leaf">cytosol_V</li>
              <li><button class="exp" aria-label="Expand"></button><svg><use href="#c-dot"/></svg>DHAP</li>
              <li><button class="exp" aria-label="Expand"></button><svg><use href="#c-dot"/></svg>EtOH</li>
              <li><button class="exp" aria-label="Expand"></button><svg><use href="#c-ring"/></svg>EtOH_node</li>
              <li><button class="exp" aria-label="Expand"></button><svg><use href="#c-dot"/></svg>F6P</li>
              <li><button class="exp" aria-label="Expand"></button><svg><use href="#c-dot"/></svg>FBP</li>
              <li><button class="exp" aria-label="Expand"></button><svg><use href="#c-dot"/></svg>G6P</li>
              <li><button class="exp" aria-label="Expand"></button><svg><use href="#c-ring"/></svg>G6P_node</li>
              <li><button class="exp" aria-label="Expand"></button><svg><use href="#c-dot"/></svg>GAP</li>
              <li><button class="exp" aria-label="Expand"></button><svg><use href="#c-dot"/></svg>Glc</li>
              <li><button class="exp" aria-label="Expand"></button><svg><use href="#c-ring"/></svg>Glc_node</li>
              <li><button class="exp" aria-label="Expand"></button><svg><use href="#c-dot"/></svg>Glyc</li>
              <li><button class="exp" aria-label="Expand"></button><svg><use href="#c-ring"/></svg>Glyc_node</li>
              <li><button class="exp" aria-label="Expand"></button><svg><use href="#c-dot"/></svg>NAD</li>
              <li><button class="exp" aria-label="Expand"></button><svg><use href="#c-dot"/></svg>NADH</li>
              <li><button class="exp" aria-label="Expand"></button><svg><use href="#c-dot"/></svg>PEP</li>
              <li><button class="exp" aria-label="Expand"></button><svg><use href="#c-dot"/></svg>Pyr</li>
              <li><button class="exp" aria-label="Expand"></button><svg><use href="#c-yy"/></svg>vADH</li>
              <li><button class="exp" aria-label="Expand"></button><svg><use href="#c-yl"/></svg>vAK</li>
              <li><button class="exp" aria-label="Expand"></button><svg><use href="#c-ly"/></svg>vALD</li>
              <li><button class="exp" aria-label="Expand"></button><svg><use href="#c-l"/></svg>vconsum</li>
              <li><button class="exp" aria-label="Expand"></button><svg><use href="#c-yy"/></svg>vGAPDH</li>
              <li><button class="exp" aria-label="Expand"></button><svg><use href="#c-yy"/></svg>vHK</li>
            </ul>
          </div>
          <div class="sb v"><button aria-label="Scroll up"><svg class="ad"><use href="#a-up"/></svg></button><div class="track"><i class="thumb t-right"></i><i class="rest r-right"></i></div><button aria-label="Scroll down"><svg class="ad"><use href="#a-down"/></svg></button></div>
        </div>
      </section>
    </div>

    <section class="params">
      <div class="side"><button aria-label="Close parameters"><svg><use href="#i-x"/></svg></button><button aria-label="Float parameters"><svg><use href="#i-float"/></svg></button><h2>Parameters</h2></div>
      <div class="panel">
        <div class="ptabs"><button class="active">Parameters</button><button>Variables</button><button>Constants</button><button>Messages</button></div>
        <div class="sheet">
          <table>
            <colgroup><col class="c-name"><col class="c-value"><col></colgroup>
            <thead><tr><th>Name</th><th>Value</th><th>Description</th></tr></thead>
            <tbody><tr><td colspan="3">No parameters found</td></tr></tbody>
          </table>
        </div>
      </div>
    </section>
  </div>
</main>

<footer class="status"><span class="msg">Ready</span><span class="prog"></span><span class="pos">X: 9.23</span><span class="pos">Y: 42.46</span><svg viewBox="0 0 14 14"><path d="M2 14L14 2M6 14l8-8M10 14l4-4" stroke="#8a867e" stroke-width="1.500"/></svg></footer>
</body>
</html>
```
FILE: styles.css
```css
* { box-sizing: border-box; }
:root {
  --face: #d4d0c8;
}
body {
  margin: 0;
  height: 100vh;
  overflow: hidden;
  display: flex;
  flex-direction: column;
  padding: 3px 2px 1px 3px;
  border: solid;
  border-width: 1px 2px 2px 1px;
  border-color: #5f6184 #3f5f86 #404040 #f4f2ee;
  background: var(--face);
  color: #111;
  font: 10px/14px "DejaVu Sans Condensed", "Noto Sans", sans-serif;
}
.defs { position: absolute; width: 0; height: 0; }
h1, h2, ul { margin: 0; padding: 0; list-style: none; font-weight: normal; font-size: 10px; }
button { font: inherit; color: inherit; padding: 0; margin: 0; border: 0; background: none; display: flex; align-items: center; justify-content: center; flex: none; white-space: nowrap; }
svg { display: block; flex: none; }
.ad { width: 7px; height: 4px; }
.al { width: 4px; height: 7px; }
.t7, .t8, .t9, .t10 { text-anchor: middle; }
.t7 { font-size: 7px; }
.t8 { font-size: 8px; }
.t9 { font-size: 9px; }
.t10 { font-size: 10px; }

.titlebar { display: flex; align-items: center; flex: none; height: 17px; padding: 0 2px 0 3px; background: linear-gradient(90deg, #0a246a, #a6caf0); color: #fff; }
.titlebar h1 { flex: 1; font: bold 11px/16px "DejaVu Sans Condensed", "Noto Sans", sans-serif; }
.appicon { width: 14px; height: 14px; margin-right: 2px; }
.cap { width: 14px; height: 13px; background: var(--face); border: 1px solid; border-color: #fff #404040 #404040 #fff; }
.cap.last { margin-left: 3px; }
.cap svg { width: 9px; height: 9px; }

.menu { display: flex; align-items: flex-end; flex: none; height: 16px; padding-left: 5px; gap: 10px; }

.toolbar { display: flex; flex: none; height: 32px; border-bottom: 1px solid #aaa69e; border-top: 1px solid #aaa69e; }
.group { display: flex; align-items: center; padding-bottom: 1px; border: solid; border-width: 1px 1px 0 1px; border-color: #fff #9a968e #9a968e #fff; }
.group.apps { flex: 1; border-right: 0; }
.handle { width: 6px; height: 24px; margin: 0 2px; border: solid; border-width: 0 1px; border-color: #8f8b84; background: linear-gradient(90deg, #fff 1px, #d4d0c8 1px 2px, #8f8b84 2px 3px, #fff 3px); flex: none; }
.sep { width: 2px; height: 26px; margin: 0 1px; background: linear-gradient(90deg, #8f8b84 1px, #fff 1px); flex: none; }
.tb { width: 28px; height: 27px; }
.tb svg { width: 24px; height: 24px; }
.tb.on { background: #ebe9e5; border: 1px solid; border-color: #8f8b84 #fff #fff #8f8b84; }
.tb.letter { color: #b4b5be; font: bold 21px/24px "DejaVu Sans Condensed", "Noto Sans", sans-serif; }
.dd { width: 10px; height: 27px; fill: #8b8881; }
.combo { display: grid; grid-template: 26px / 1fr 15px; width: 54px; height: 28px; background: #fff; border: 1px solid; border-color: #404040 #fff #fff #404040; margin: 0 2px 0 0; }
.combo select { grid-area: 1 / 1 / 2 / 3; appearance: none; border: 1px solid #808080; background: none; font: inherit; padding: 0 4px; margin: 0; border-radius: 0; min-width: 0; }
.drop { grid-area: 1 / 2; display: flex; align-items: center; justify-content: center; margin: 1px; background: var(--face); border: 1px solid; border-color: #fff #404040 #404040 #fff; pointer-events: none; }
.app { gap: 4px; margin-right: 12px; }
.app svg { width: 20px; height: 20px; }
.apps .handle { margin-right: 30px; }

main { flex: 1; min-height: 0; display: grid; grid-template-columns: 187px 1fr; gap: 4px; }
.dock { display: flex; flex-direction: column; min-height: 0; min-width: 0; }
.docktitle { display: flex; align-items: center; gap: 6px; flex: none; height: 18px; margin-top: 1px; padding: 0 4px 0 2px; background: #a6a6a6; }
.docktitle h2 { flex: 1; }
.docktitle svg, .side svg { width: 9px; height: 9px; }
.find { display: flex; flex: none; gap: 2px; margin: 3px 2px 0; height: 20px; }
.find input { flex: 1; min-width: 0; height: 17px; align-self: center; border: 1px solid; border-color: #404040 #fff #fff #404040; font: inherit; padding: 0 3px; }
.find button { width: 38px; border: 1px solid; border-color: #fff #404040 #404040 #fff; }
.current { display: flex; align-items: center; gap: 4px; flex: none; height: 21px; padding-left: 3px; }
.current svg { width: 16px; height: 16px; }
.treebox { flex: 1; min-height: 0; display: flex; border: 2px solid; border-color: #606060 #f4f2ee #f4f2ee #606060; background: #fff; margin: 0 1px 1px 1px; }
.scrollport { flex: 1; min-width: 0; overflow: hidden; }
.cat { display: flex; align-items: center; gap: 4px; height: 14px; padding-left: 3px; background: var(--face); }
.tree li { display: flex; align-items: center; gap: 5px; height: 21px; padding-left: 13px; white-space: nowrap; background: repeating-linear-gradient(#999 0 1px, transparent 1px 2px) 17px 0 / 1px 100% no-repeat; }
.tree li:nth-child(even) { height: 22px; }
.tree li svg { width: 20px; height: 20px; }
.tree li.l1 { padding-left: 1px; background-position: 5px 0; }
.tree li.mid { background: repeating-linear-gradient(#999 0 1px, transparent 1px 2px) 17px 0 / 1px 100% no-repeat, repeating-linear-gradient(#999 0 1px, transparent 1px 2px) 5px 0 / 1px 100% no-repeat; }
.tree li.sel { background: repeating-linear-gradient(#999 0 1px, transparent 1px 2px) 17px 0 / 1px 100% no-repeat, repeating-linear-gradient(#999 0 1px, transparent 1px 2px) 5px 0 / 1px 100% no-repeat, linear-gradient(90deg, #fff 23px, #d4d0c8 23px); }
.exp { width: 9px; height: 9px; border: 1px solid #848078; background: linear-gradient(#000, #000) 1px 3px / 5px 1px no-repeat, linear-gradient(#000, #000) 3px 1px / 1px 5px no-repeat #fff; }
.exp.open { background: linear-gradient(#000, #000) 1px 3px / 5px 1px no-repeat #fff; }
.cat .exp { background-color: var(--face); }
.gap { width: 9px; }

.sb { display: flex; flex: none; }
.sb.v { flex-direction: column; width: 14px; }
.sb.h { height: 14px; }
.sb button { width: 14px; height: 14px; background: var(--face); border: 1px solid; border-color: #fff #404040 #404040 #fff; }
.track { flex: 1; display: flex; min-height: 0; background: #eae8e4; }
.v .track { flex-direction: column; }
.thumb { background: var(--face); border: 1px solid; border-color: #f6f5f2 #404040 #404040 #f6f5f2; }
.t-left { flex: 81; } .r-left { flex: 19; }
.t-right { flex: 76; } .r-right { flex: 24; }
.t-50 { flex: 50; } .r-25 { flex: 25; }
.t-56 { flex: 56; } .r-22 { flex: 22; }

.work { display: flex; flex-direction: column; min-width: 0; min-height: 0; border-left: 1px solid #606060; }
.upper { flex: 1; min-height: 0; display: grid; grid-template-columns: minmax(0, 1fr) 163px; gap: 4px; }
.editor { display: flex; flex-direction: column; min-width: 0; min-height: 0; }
.tabs { display: flex; align-items: flex-end; height: 20px; flex: none; border-bottom: 1px solid #fff; }
.tab { height: 18px; padding: 0 9px; gap: 5px; border: 1px solid; border-color: #fff #404040 transparent #fff; }
.tab + .tab { margin-left: 1px; }
.tab svg { width: 10px; height: 10px; }
.tab.cut { width: 45px; padding: 0 11px 0 0; justify-content: flex-end; overflow: hidden; border-left: 0; }
.tab.active { height: 20px; border-right-color: transparent; padding-right: 4px; flex: 1; justify-content: flex-start; }
.tabscroll { display: flex; flex: none; }
.tabscroll button { width: 14px; height: 19px; border: 1px solid; border-color: #fff #404040 #404040 #fff; }
.tabscroll button:disabled { fill: #9a968e; }
.info { display: grid; grid-template-columns: minmax(0, 1fr) 42px 82px 161px; gap: 2px; flex: none; padding: 3px 0 2px; }
.info span { height: 15px; padding-left: 2px; border: 1px solid; border-color: #8f8b84 #fff #fff #8f8b84; line-height: 13px; white-space: nowrap; overflow: hidden; }
.canvasbox { flex: 1; min-height: 0; display: grid; grid-template: minmax(0, 1fr) 14px / minmax(0, 1fr) 14px; border: 1px solid; border-color: #505050 #fff #fff #505050; margin: 0 1px 2px 0; }
.canvas { display: flex; align-items: center; justify-content: center; overflow: hidden; padding-left: 2px; background: linear-gradient(#c0dde9, #3a97c4); }
.diagram { width: 308px; height: 433px; }
.b { fill: none; stroke: #2b6a96; stroke-width: 1.1; }
.r { fill: none; stroke: #d02a34; stroke-width: 1.2; }
.lab { font-size: 6px; text-anchor: middle; fill: #000; stroke: #000; stroke-width: .2; }

.components .docktitle { margin-bottom: 3px; }
.components .treebox { margin-right: 1px; border-width: 1px 1px 1px 2px; }
.colhead { width: 100%; height: 19px; padding: 0 6px 0 2px; justify-content: space-between; background: var(--face); border: 1px solid; border-color: #fff #808080 #808080 #fff; }
.components .sb.v { margin-left: 8px; }
.colhead svg { width: 10px; height: 8px; }
.tree.parts li, .tree.parts li:nth-child(even) { height: 16px; padding-left: 1px; gap: 4px; background-position: 5px 0; }
.tree.parts li:nth-child(10n+6) { height: 17px; }
.tree.parts li svg { width: 16px; height: 16px; }
.tree.parts .exp + svg { margin-right: 1px; }
.tree.parts li.leaf, .tree.parts li.leaf:nth-child(even) { height: 12px; padding-left: 13px; line-height: 12px; }

.params { flex: none; display: flex; height: 96px; margin-top: 2px; border-top: 2px solid #606060; padding: 1px 2px 1px 1px; }
.side { width: 18px; background: #a6a6a6; display: flex; flex-direction: column; align-items: center; gap: 6px; padding-top: 3px; }
.side h2 { writing-mode: vertical-rl; transform: rotate(180deg); margin-top: 8px; line-height: 14px; }
.panel { flex: 1; display: flex; flex-direction: column; padding-left: 3px; min-width: 0; }
.ptabs { display: flex; align-items: flex-end; height: 17px; flex: none; }
.ptabs button { height: 15px; padding: 0 8px; border: solid; border-width: 1px 2px 0 1px; border-color: #fff #505050 transparent #fff; }
.ptabs .active { height: 17px; }
.sheet { flex: 1; border: 1px solid; border-color: #fff #606060 #606060 #fff; display: flex; }
table { width: 100%; border-collapse: collapse; table-layout: fixed; }
.c-name { width: 38px; } .c-value { width: 156px; }
th { text-align: left; font-weight: normal; height: 17px; padding: 0 0 0 2px; border-bottom: 1px solid #fff; }
td { text-align: center; vertical-align: middle; border-top: 1px solid #a09c94; }

.status { display: flex; flex: none; gap: 2px; height: 18px; padding: 1px 0; }
.status span { border: 1px solid; border-color: #8f8b84 #fff #fff #8f8b84; padding-left: 4px; line-height: 15px; }
.msg { flex: 1; }
.prog { width: 137px; }
.pos { width: 58px; }
.status svg { width: 14px; height: 14px; align-self: flex-end; }
```
